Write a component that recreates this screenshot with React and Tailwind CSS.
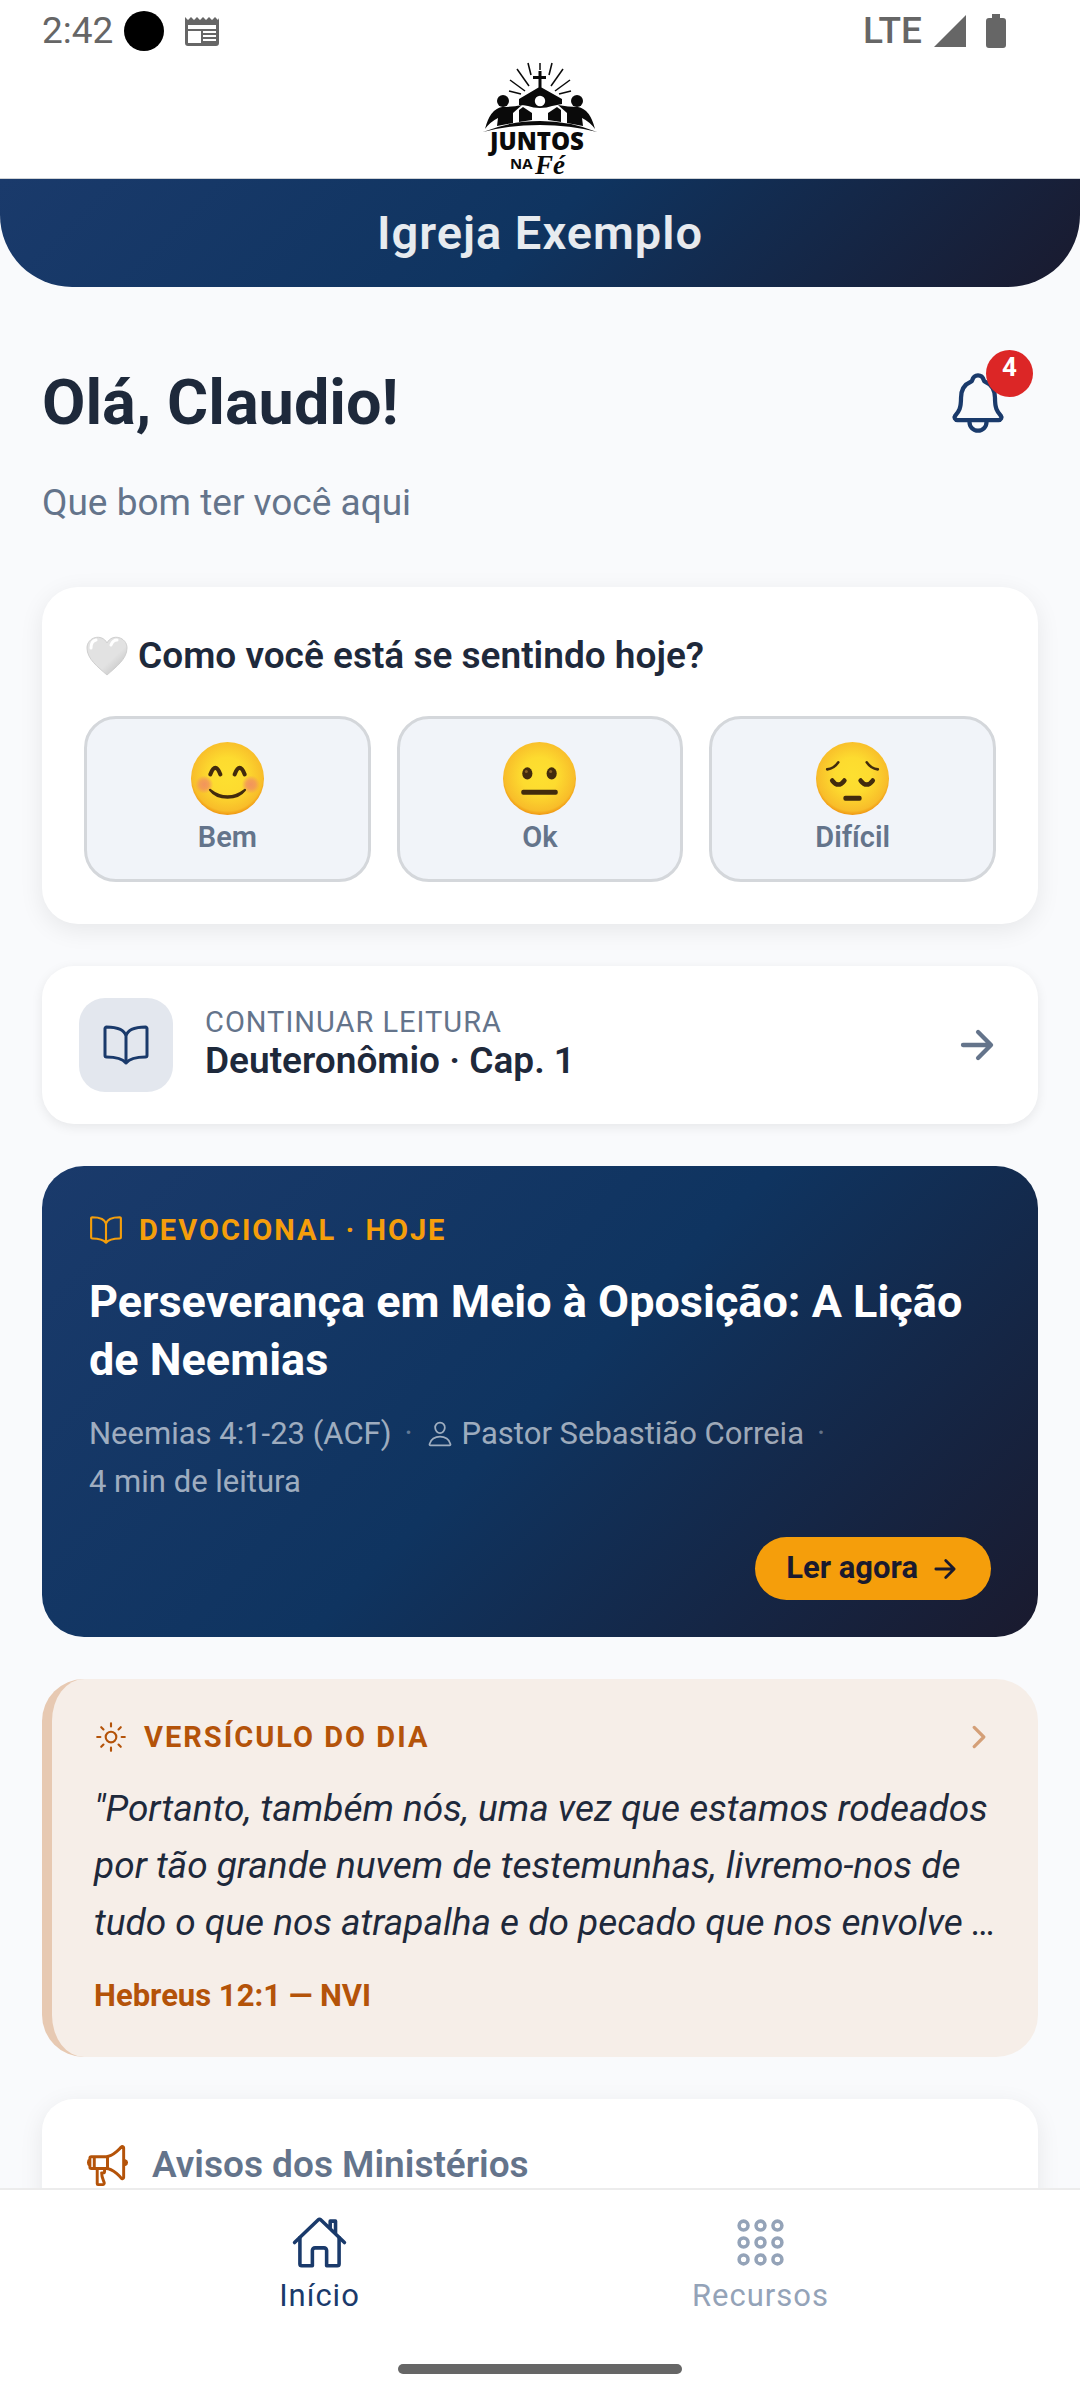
import {
  IoAppsOutline, IoArrowForward, IoBookOutline, IoChevronForward, IoHomeOutline,
  IoMegaphoneOutline, IoNotificationsOutline, IoPersonOutline, IoSunnyOutline,
} from "react-icons/io5";

const rays = [
  [58, 1, 58, 8], [46, 1, 49, 13], [70, 1, 67, 13], [35, 7, 47, 24], [81, 7, 69, 24],
  [28, 18, 43, 29], [88, 18, 73, 29], [27, 29, 39, 32], [89, 29, 77, 32],
];

function Logo() {
  return (
    <svg viewBox="0 0 116 116" className="w-[116px] h-[116px]" role="img" aria-label="Juntos na Fé" fill="#0a0a0a">
      {rays.map(([x1, y1, x2, y2]) => (
        <line key={`${x1}-${y1}`} x1={x1} y1={y1} x2={x2} y2={y2} stroke="#0a0a0a" strokeWidth="1.5" />
      ))}
      <path d="M56.500 9h3v5H64v3h-4.500v8.500L80 37v5q-5 1-10 2-5 2-12 2t-12-2q-4-1-9-1v-6l19.500-11.500V17H51v-3h5.500z" />
      <circle cx="58" cy="39" r="5.200" fill="#fff" />
      <circle cx="21" cy="39" r="6" />
      <circle cx="95" cy="39" r="6" />
      <path d="M3 67Q8 47 20 45q10 0 20-2l-9 8v10l-16 3 1-8Q8 60 3 67z" />
      <path d="M113 67q-5-20-17-22-10 0-20-2l9 8v10l16 3-1-8q8 4 13 11z" />
      <path d="M37 48l4-3 9 6v7l-13 2z" />
      <path d="M79 48l-4-3-9 6v7l13 2z" />
      <path d="M1 70Q28 59 58 59t57 11Q88 63 58 63T1 70z" />
      <text x="55" y="88" textAnchor="middle" className="font-['Open_Sans',sans-serif] font-extrabold text-[24px]">JUNTOS</text>
      <text x="28" y="107" className="font-['Open_Sans',sans-serif] font-bold text-[15px]">NA</text>
      <text x="53" y="112" className="font-['Liberation_Serif',serif] font-bold italic text-[27px]">Fé</text>
    </svg>
  );
}

function Face({ mood }) {
  return (
    <svg viewBox="0 0 72 72" className="w-[73px] h-[73px]" aria-hidden="true">
      <defs>
        <radialGradient id={`skin-${mood}`} cx="50%" cy="46%" r="55%">
          <stop offset="0" stopColor="#fde030" />
          <stop offset="0.45" stopColor="#fddb2f" />
          <stop offset="0.88" stopColor="#f8bd2a" />
          <stop offset="1" stopColor="#ee8f0c" />
        </radialGradient>
        <radialGradient id={`cheek-${mood}`}>
          <stop offset="0" stopColor="#f2945c" />
          <stop offset="0.5" stopColor="#f2945c" stopOpacity="0.8" />
          <stop offset="1" stopColor="#f2945c" stopOpacity="0" />
        </radialGradient>
      </defs>
      <circle cx="36" cy="36" r="36" fill={`url(#skin-${mood})`} />
      {mood === "bem" && (
        <>
          <circle cx="13" cy="42" r="9" fill="url(#cheek-bem)" />
          <circle cx="59" cy="42" r="9" fill="url(#cheek-bem)" />
          <path d="M19 32q5-13 10 0M43 32q5-13 10 0" fill="none" stroke="#422b0d" strokeWidth="4" strokeLinecap="round" />
          <path d="M19 46q17 13 34 0 2 0 1 2-6 8-18 8t-18-8q-1-2 1-2z" fill="#422b0d" />
        </>
      )}
      {mood === "ok" && (
        <>
          <ellipse cx="24" cy="31" rx="5" ry="6" fill="#422b0d" />
          <ellipse cx="48" cy="31" rx="5" ry="6" fill="#422b0d" />
          <circle cx="23" cy="29" r="1.500" fill="#896024" />
          <circle cx="47" cy="29" r="1.500" fill="#896024" />
          <rect x="18" y="47" width="36" height="5" rx="2" fill="#422b0d" />
        </>
      )}
      {mood === "dificil" && (
        <>
          <g fill="none" stroke="#422b0d" strokeLinecap="round">
            <path d="M11 27q7-1 11-7M61 27q-7-1-11-7" strokeWidth="2.500" />
            <path d="M16 38q6 8 12 0M44 38q6 8 12 0" strokeWidth="4.500" />
          </g>
          <rect x="27" y="53" width="18" height="5" rx="2" fill="#422b0d" />
        </>
      )}
    </svg>
  );
}

function WhiteHeart() {
  return (
    <svg viewBox="0 0 42 40" className="w-[42px] h-[40px]" aria-hidden="true">
      <defs>
        <linearGradient id="heart" x1="0" y1="0" x2="1" y2="1">
          <stop offset="0.6" stopColor="#e2e2e2" />
          <stop offset="1" stopColor="#b8b8b8" />
        </linearGradient>
      </defs>
      <path d="M21 39C12 31 1 23 1 12 1 1 16-3 21 7c5-10 20-6 20 5 0 11-11 19-20 27z" fill="url(#heart)" stroke="#cfcfcf" />
      <path d="M5 12q0-7 5-8M25 9q2-5 6-5" fill="none" stroke="#fff" strokeWidth="3" strokeLinecap="round" />
    </svg>
  );
}

function StatusBar() {
  return (
    <div className="flex items-center justify-between h-[62px] pl-[42px] pr-[74px] text-[#666]">
      <div className="flex items-center">
        <span className="text-[37px] leading-[42px]">2:42</span>
        <span className="w-[40px] h-[40px] ml-[11px] rounded-full bg-black" />
        <svg viewBox="0 0 34 30" className="w-[34px] h-[30px] ml-[21px]" fill="#666">
          <path d="M0 1l3 3 3-3 3 3 3-3 3 3 3-3 3 3 3-3 3 3 3-3 3 3 1-2v25q0 3-3 3H3q-3 0-3-3zM3 9v4h28V9zm0 6v12h13V15zm15 0v2h13v-2zm0 4v2h13v-2zm0 4v2h13v-2z" fillRule="evenodd" />
        </svg>
      </div>
      <div className="flex items-center">
        <span className="text-[37px] leading-[42px] font-medium">LTE</span>
        <svg viewBox="0 0 32 32" className="w-[32px] h-[32px] ml-[12px]" fill="#666"><path d="M32 0v32H0z" /></svg>
        <svg viewBox="0 0 20 34" className="w-[20px] h-[34px] ml-[20px]" fill="#666">
          <path d="M6 0h8v4h3q3 0 3 3v24q0 3-3 3H3q-3 0-3-3V7q0-3 3-3h3z" />
        </svg>
      </div>
    </div>
  );
}

const moods = [
  { id: "bem", label: "Bem" },
  { id: "ok", label: "Ok" },
  { id: "dificil", label: "Difícil" },
];

export default function App() {
  return (
    <div className="flex flex-col h-screen overflow-hidden bg-[#f9fafc] font-[Roboto,sans-serif] text-[#1e293b]">
      <header className="shrink-0 bg-white border-b border-[#d0d3d6]">
        <StatusBar />
        <div className="flex justify-center"><Logo /></div>
      </header>

      <main className="flex-1 min-h-0 overflow-hidden">
        <div className="flex items-center justify-center h-[108px] rounded-b-[72px] bg-[linear-gradient(135deg,#1a3a6b_0%,#0f3460_50%,#1a1a2e_100%)]">
          <span className="text-[47px] leading-[56px] font-semibold tracking-[1px] text-white/90">Igreja Exemplo</span>
        </div>

        <div className="px-[42px]">
          <div className="flex items-center justify-between pt-[78px]">
            <h1 className="text-[63px] leading-[76px] font-bold">Olá, Claudio!</h1>
            <button type="button" aria-label="Notificações" className="relative mr-[26px] text-[#1a3a6b]">
              <IoNotificationsOutline className="w-[68px] h-[68px]" />
              <span className="absolute -top-[19px] -right-[21px] flex justify-center w-[47px] h-[47px] rounded-full bg-[#dc2626] text-white text-[26px] leading-[34px] font-bold">4</span>
            </button>
          </div>
          <p className="mt-[38px] text-[37px] leading-[48px] text-[#64748b]">Que bom ter você aqui</p>

          <section className="mt-[60px] rounded-[36px] bg-white p-[42px] shadow-[0_6px_24px_rgba(0,0,0,0.08)]">
            <h2 className="flex items-center gap-[10px] pl-[2px] text-[37px] leading-[54px] font-semibold">
              <WhiteHeart />
              Como você está se sentindo hoje?
            </h2>
            <div className="grid grid-cols-3 gap-[26px] mt-[33px]">
              {moods.map(mood => (
                <button key={mood.id} type="button" className="flex flex-col items-center h-[166px] pt-[23px] rounded-[32px] border-3 border-[#d4d7db] bg-[#f1f4f9]">
                  <Face mood={mood.id} />
                  <span className="mt-[4px] text-[29px] leading-[36px] font-semibold text-[#64748b]">{mood.label}</span>
                </button>
              ))}
            </div>
          </section>

          <a href="#leitura" className="flex items-center h-[158px] mt-[42px] pl-[37px] pr-[38px] rounded-[32px] bg-white shadow-[0_3px_12px_rgba(0,0,0,0.08)]">
            <span className="flex items-center justify-center w-[94px] h-[94px] rounded-[26px] bg-[#e3e7ee] text-[#1a3a6b]">
              <IoBookOutline className="w-[48px] h-[48px]" />
            </span>
            <span className="flex-1 ml-[32px] pb-[4px]">
              <span className="block text-[29px] leading-[36px] tracking-[1px] text-[#64748b]">CONTINUAR LEITURA</span>
              <span className="block text-[37px] leading-[42px] font-semibold">Deuteronômio · Cap. 1</span>
            </span>
            <IoArrowForward className="w-[46px] h-[46px] text-[#64748b]" />
          </a>

          <section className="mt-[42px] p-[47px] pb-[37px] rounded-[42px] bg-[linear-gradient(135deg,#1a3a6b_0%,#0f3460_50%,#1a1a2e_100%)] text-white">
            <p className="flex items-center gap-[16px] text-[29px] leading-[32px] font-bold tracking-[2px] text-[#f59e0b]">
              <IoBookOutline className="w-[34px] h-[34px]" />
              DEVOCIONAL · HOJE
            </p>
            <h2 className="mt-[26px] text-[45px] leading-[58px] font-bold">Perseverança em Meio à Oposição: A Lição de Neemias</h2>
            <div className="mt-[21px] text-[31px] leading-[48px] text-white/60">
              <div className="flex items-center">
                <span>Neemias 4:1-23 (ACF)</span>
                <span className="mx-[13px] text-white/35">·</span>
                <IoPersonOutline className="w-[28px] h-[28px] mr-[8px]" />
                <span>Pastor Sebastião Correia</span>
                <span className="ml-[13px] text-white/35">·</span>
              </div>
              <span>4 min de leitura</span>
            </div>
            <div className="flex justify-end mt-[31px]">
              <button type="button" className="flex items-center h-[63px] gap-[12px] px-[31px] rounded-full bg-[#f59e0b] text-[#1a1a2e] text-[31px] font-bold">
                Ler agora
                <IoArrowForward className="w-[30px] h-[30px]" />
              </button>
            </div>
          </section>

          <section className="mt-[42px] pt-[38px] pb-[40px] pl-[42px] pr-[32px] rounded-[42px] border-l-10 border-[#e7c9b2] bg-[#f6eee8]">
            <div className="flex items-center justify-between pr-[10px] text-[#b45309]">
              <p className="flex items-center gap-[16px] text-[29px] leading-[40px] font-bold tracking-[2px]">
                <IoSunnyOutline className="w-[34px] h-[34px]" />
                VERSÍCULO DO DIA
              </p>
              <IoChevronForward className="w-[34px] h-[34px] opacity-50" />
            </div>
            <p className="mt-[23px] text-[37px] leading-[57px] italic">
              "Portanto, também nós, uma vez que estamos rodeados por tão grande nuvem de testemunhas, livremo-nos de tudo o que nos atrapalha e do pecado que nos envolve …
            </p>
            <p className="mt-[24px] text-[31px] leading-[42px] font-bold text-[#b45309]">Hebreus 12:1 — NVI</p>
          </section>

          <section className="h-[240px] mt-[42px] px-[42px] pt-[42px] rounded-[32px] bg-white shadow-[0_6px_24px_rgba(0,0,0,0.08)]">
            <h2 className="flex items-center gap-[21px] text-[37px] leading-[48px] font-semibold text-[#64748b]">
              <IoMegaphoneOutline className="w-[47px] h-[47px] text-[#b45309]" />
              Avisos dos Ministérios
            </h2>
          </section>
        </div>
      </main>

      <nav className="shrink-0 flex flex-col items-center h-[212px] border-t-2 border-[#ececec] bg-white">
        <div className="flex w-full px-[99px] pt-[24px]">
          <a href="#inicio" className="flex flex-1 flex-col items-center text-[31px] leading-[42px] tracking-[1px] text-[#1a3a6b]">
            <IoHomeOutline className="w-[57px] h-[57px] mb-[4px]" />
            Início
          </a>
          <a href="#recursos" className="flex flex-1 flex-col items-center text-[31px] leading-[42px] tracking-[1px] text-[#94a3b8]">
            <IoAppsOutline className="w-[57px] h-[57px] mb-[4px]" />
            Recursos
          </a>
        </div>
        <span className="w-[284px] h-[10px] mt-auto mb-[26px] rounded-full bg-[#666]" />
      </nav>
    </div>
  );
}
